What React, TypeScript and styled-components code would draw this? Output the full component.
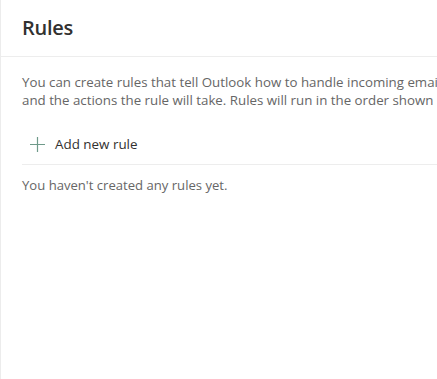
import React from 'react';
import styled, { createGlobalStyle } from 'styled-components';

const GlobalStyle = createGlobalStyle`
    html, body {
        margin: 0;
        padding: 0;
        background: #fff;
        overflow: hidden;
    }
    body {
        font-family: "Segoe UI", "Open Sans", "Noto Sans", sans-serif;
    }
`;

const Page = styled.div`
    width: 437px;
    height: 379px;
    overflow: hidden;
    border-left: 1px solid #ececec;
    box-sizing: border-box;
    background: #fff;
`;

const Header = styled.div`
    height: 57px;
    display: flex;
    align-items: center;
    padding: 0 21px;
    border-bottom: 1px solid #ededed;
    box-sizing: border-box;
`;

const Title = styled.h1`
    margin: 0 0 2px 0;
    font-size: 20px;
    font-weight: 600;
    color: #323130;
    letter-spacing: -0.3px;
`;

const Body = styled.div`
    padding: 16px 0 0 21px;
`;

const Description = styled.p`
    margin: 0;
    font-size: 13.3px;
    line-height: 18px;
    color: #666;
    white-space: nowrap;
`;

const AddButton = styled.button`
    display: flex;
    align-items: center;
    gap: 9px;
    margin-top: 19px;
    padding: 0 0 0 7px;
    height: 32px;
    background: none;
    border: none;
    font-family: inherit;
    font-size: 13.4px;
    color: #323130;
    cursor: pointer;
`;

const Divider = styled.div`
    margin-top: 4px;
    border-top: 1px solid #ededed;
`;

const EmptyText = styled.p`
    margin: 11px 0 0 0;
    font-size: 13.1px;
    line-height: 18px;
    color: #666;
`;

const PlusIcon = () => (
    <svg width="17" height="17" viewBox="0 0 17 17">
        <path d="M8.5 1v15M1 8.5h15" stroke="#6f9a8a" strokeWidth="1.2" fill="none" />
    </svg>
);

export default function App() {
    return (
        <Page>
            <GlobalStyle />
            <Header>
                <Title>Rules</Title>
            </Header>
            <Body>
                <Description>
                    You can create rules that tell Outlook how to handle incoming email messages based on
                    <br />
                    and the actions the rule will take. Rules will run in the order shown in the list below.
                </Description>
                <AddButton>
                    <PlusIcon />
                    Add new rule
                </AddButton>
                <Divider />
                <EmptyText>You haven't created any rules yet.</EmptyText>
            </Body>
        </Page>
    );
}
